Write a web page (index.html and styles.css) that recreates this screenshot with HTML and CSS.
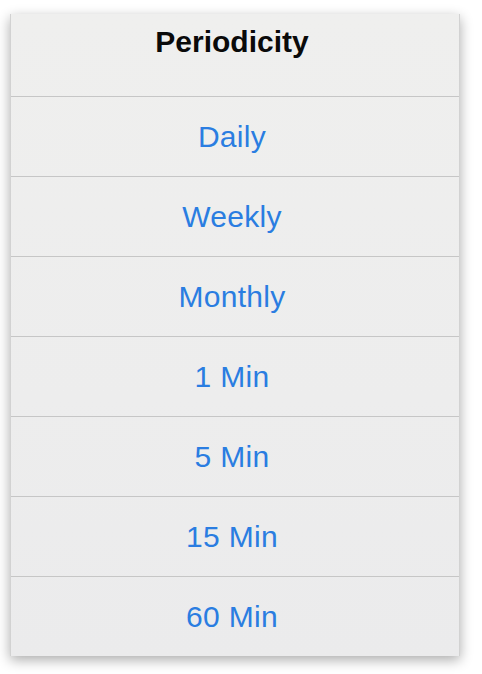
FILE: index.html
```html
<!DOCTYPE html>
<html lang="en">
<head>
  <meta charset="UTF-8" />
  <meta name="viewport" content="width=device-width, initial-scale=1.0"/>
  <title>Periodicity</title>
  <link rel="stylesheet" href="styles.css">
</head>
<body>

  <!-- Feuille de choix de la périodicité -->
  <div class="sheet">
    <div class="sheet-header">
      <h1>Periodicity</h1>
    </div>
    <div class="sheet-option">Daily</div>
    <div class="sheet-option">Weekly</div>
    <div class="sheet-option">Monthly</div>
    <div class="sheet-option">1 Min</div>
    <div class="sheet-option">5 Min</div>
    <div class="sheet-option">15 Min</div>
    <div class="sheet-option">60 Min</div>
  </div>

</body>
</html>
```

FILE: styles.css
```css
/* Reset */
* {
  margin: 0;
  padding: 0;
  box-sizing: border-box;
  font-family: 'Liberation Sans', Arial, sans-serif;
}
body {
  background-color: #fff;
  width: 482px;
  height: 674px;
  overflow: hidden;
}

/* Carte */
.sheet {
  width: 450px;
  margin: 14px 0 0 10px;
  background: linear-gradient(to bottom, #efefee 0%, #ededed 60%, #ebebec 100%);
  border-left: 1px solid #d2d2d2;
  border-right: 1px solid #d2d2d2;
  box-shadow: 0 4px 12px rgba(0,0,0,0.33);
  display: flex;
  flex-direction: column;
}

/* Titre */
.sheet-header {
  height: 83px;
  padding: 13px 6px 0 0;
  border-bottom: 1px solid #c6c6c6;
  text-align: center;
}
.sheet-header h1 {
  font-size: 30px;
  line-height: 30px;
  font-weight: bold;
  color: #0a0a0a;
}

/* Options */
.sheet-option {
  height: 80px;
  padding-right: 6px;
  display: flex;
  justify-content: center;
  align-items: center;
  font-size: 30px;
  letter-spacing: 0.3px;
  color: #2a7de1;
  border-bottom: 1px solid #c6c6c6;
}
.sheet-option:last-child {
  height: 79px;
  border-bottom: none;
}
```
